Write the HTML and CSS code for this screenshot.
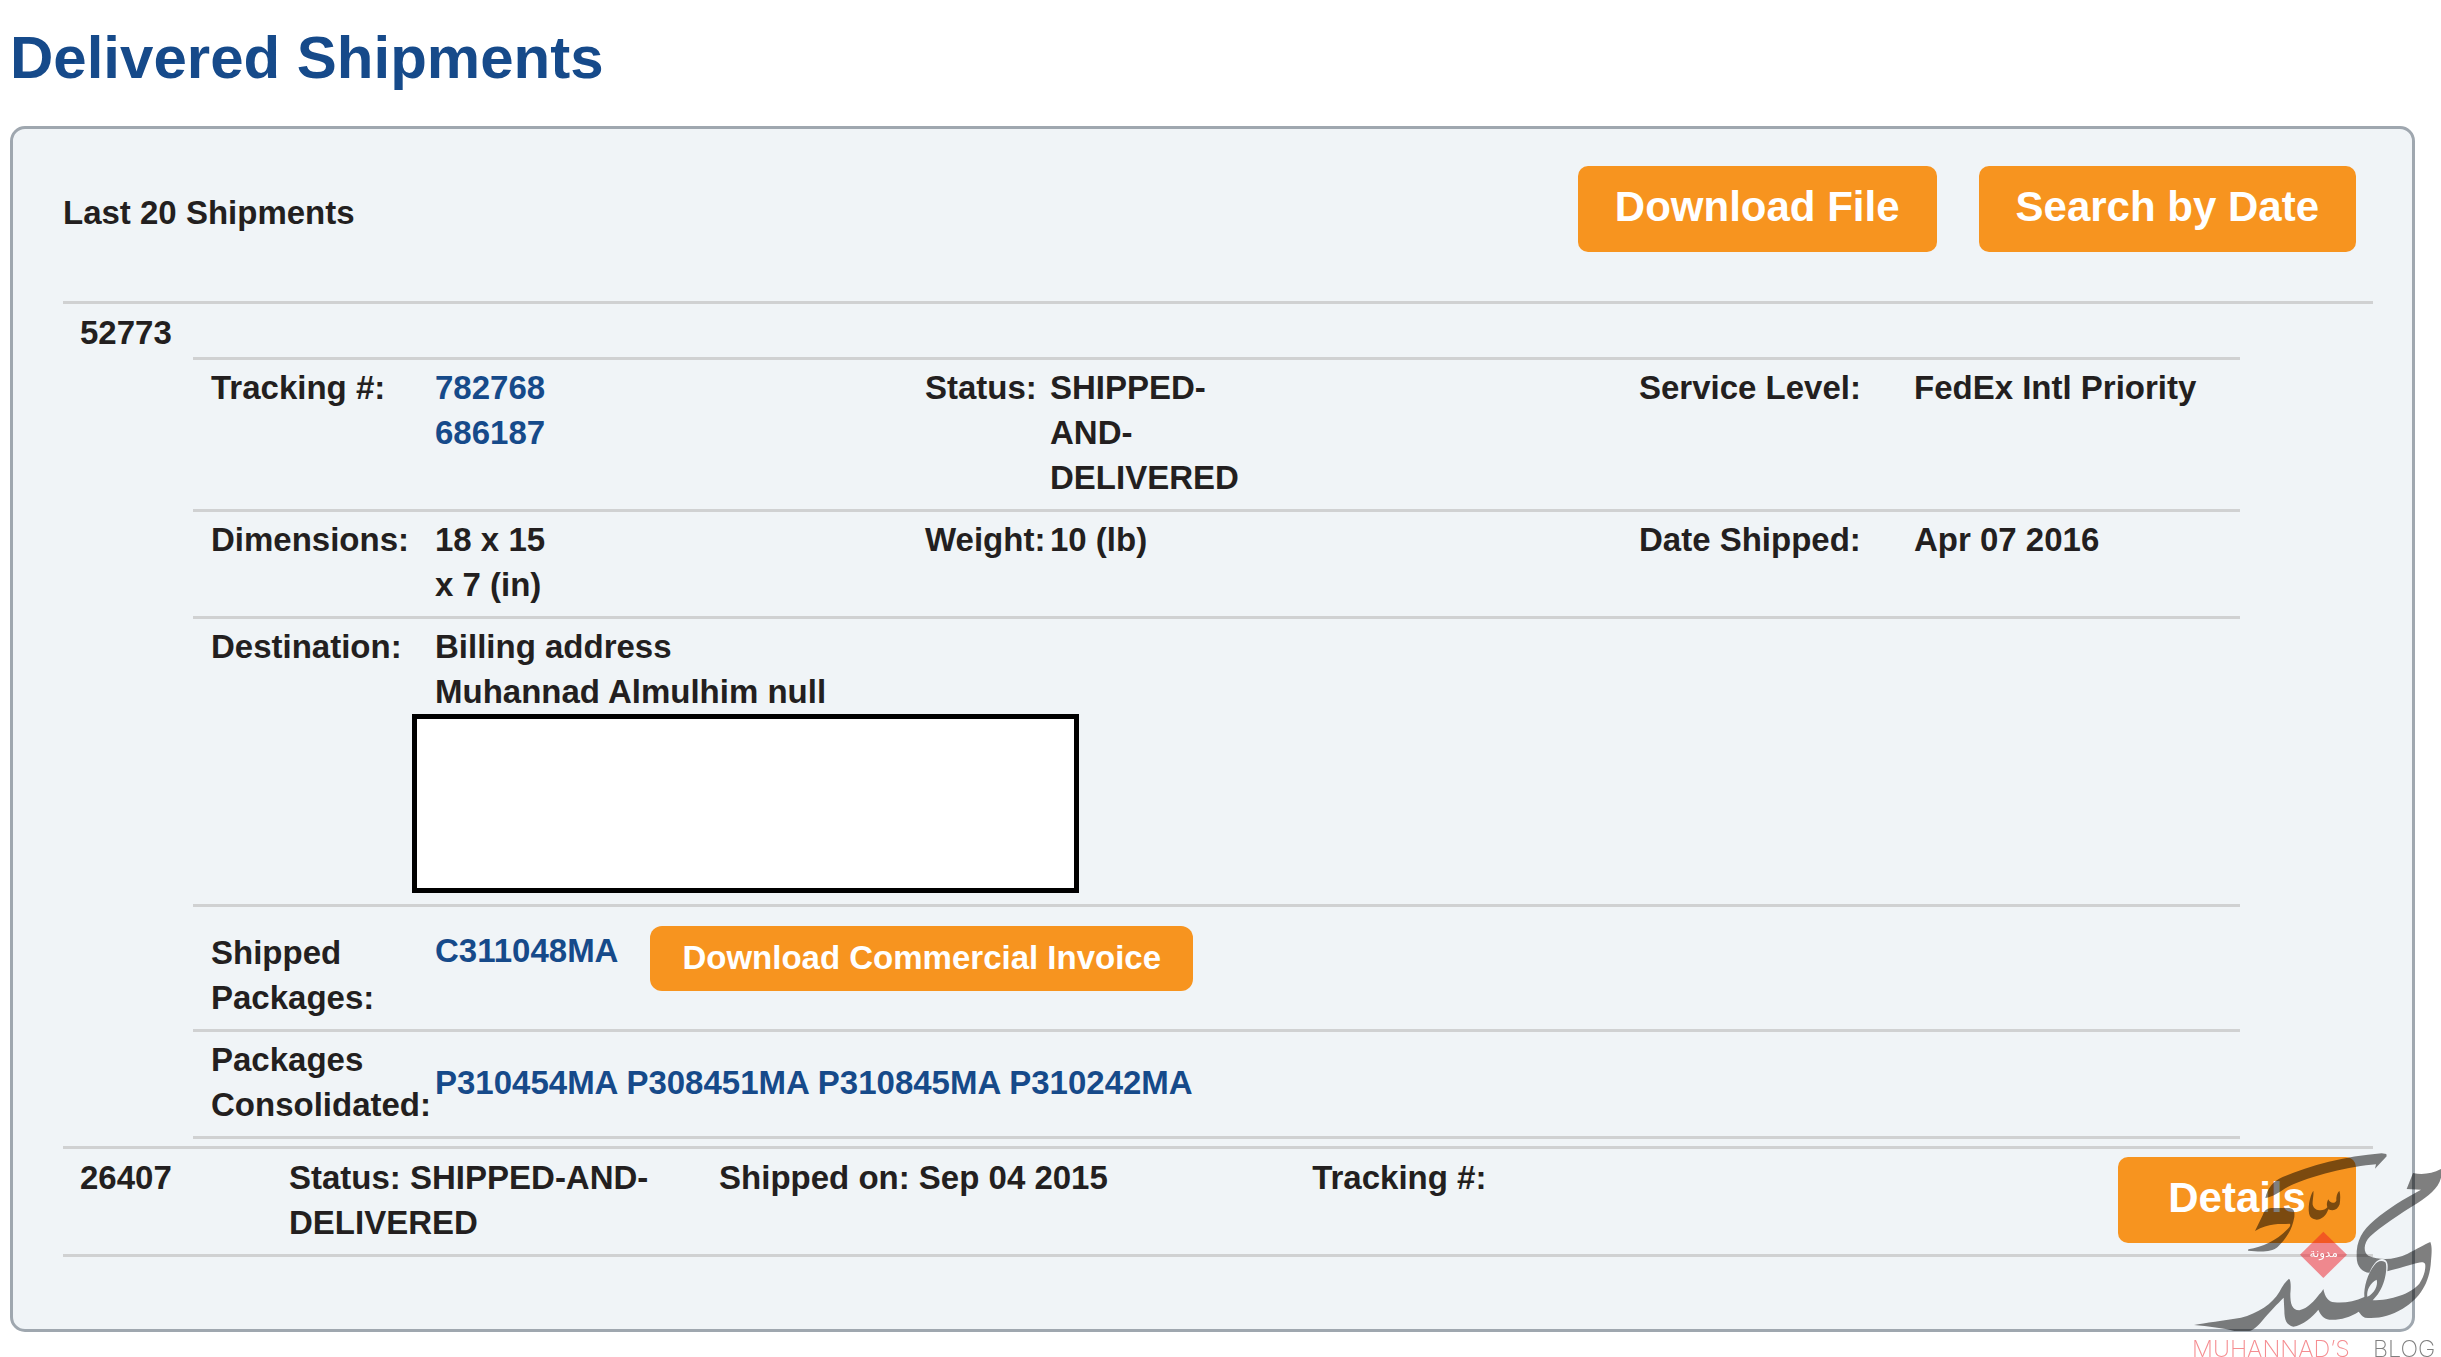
FILE: index.html
```html
<!DOCTYPE html>
<html lang="en">

<head>
    <meta charset="UTF-8">
    <title>Delivered Shipments</title>
    <link rel="stylesheet" href="styles.css">
</head>

<body>
    <h1>Delivered Shipments</h1>

    <main class="panel">
        <div class="panel-header">
            <h2>Last 20 Shipments</h2>
            <div class="actions">
                <button type="button" class="btn">Download File</button>
                <button type="button" class="btn">Search by Date</button>
            </div>
        </div>

        <!-- opened shipment -->
        <section class="shipment">
            <div class="shipment-id">52773</div>
            <div class="details">
                <dl class="row fields">
                    <dt>Tracking #:</dt>
                    <dd><a href="#" class="short">782768 686187</a></dd>
                    <dt>Status:</dt>
                    <dd><span class="status">SHIPPED-AND-DELIVERED</span></dd>
                    <dt>Service Level:</dt>
                    <dd>FedEx Intl Priority</dd>
                </dl>
                <dl class="row fields">
                    <dt>Dimensions:</dt>
                    <dd><span class="short">18 x 15 x 7 (in)</span></dd>
                    <dt>Weight:</dt>
                    <dd>10 (lb)</dd>
                    <dt>Date Shipped:</dt>
                    <dd>Apr 07 2016</dd>
                </dl>
                <dl class="row single destination">
                    <dt>Destination:</dt>
                    <dd>
                        Billing address<br>
                        Muhannad Almulhim null
                        <div class="address-box"></div>
                    </dd>
                </dl>
                <dl class="row single shipped">
                    <dt>Shipped Packages:</dt>
                    <dd>
                        <a href="#">C311048MA</a>
                        <button type="button" class="btn btn-small">Download Commercial Invoice</button>
                    </dd>
                </dl>
                <dl class="row single consolidated">
                    <dt>Packages Consolidated:</dt>
                    <dd>
                        <a href="#">P310454MA</a>
                        <a href="#">P308451MA</a>
                        <a href="#">P310845MA</a>
                        <a href="#">P310242MA</a>
                    </dd>
                </dl>
            </div>
        </section>

        <!-- closed shipment -->
        <section class="shipment summary">
            <div>26407</div>
            <div>Status: SHIPPED-AND-DELIVERED</div>
            <div>Shipped on: Sep 04 2015</div>
            <div>Tracking #:</div>
            <button type="button" class="btn btn-details">Details</button>
        </section>
    </main>

    <svg class="watermark" viewBox="0 0 1050 750" role="img" aria-label="Muhannad's Blog">
        <g class="ink">
            <path d="M523 273C530 245 545 222 575 210C660 175 760 148 872 139L886 141L887 148L852 185L855 172C780 178 660 205 590 240C565 255 545 270 523 273Z"/>
            <path d="M492 372L515 325C520 308 530 303 548 303L595 303C612 306 611 318 610 330C603 370 585 395 560 420C540 436 510 435 471 431L472 427C515 420 555 402 590 366C598 358 600 352 596 350C565 352 535 346 492 372Z"/>
            <path d="M667 251C669 262 664 280 665 293C670 314 699 314 709 301C706 292 708 284 712 277C716 288 730 292 736 281C735 270 738 258 745 251C749 262 748 278 746 292C740 309 727 313 712 307C702 338 672 347 657 328C648 309 656 266 667 251Z"/>
            <path fill-rule="evenodd" d="M966 198C995 204 1022 200 1050 186L1050 212C1042 245 1010 268 980 288C925 322 870 358 838 388C815 410 818 438 832 446C870 462 915 457 950 440C975 428 1000 412 1018 405C1024 420 1022 440 1020 462C1016 530 985 575 935 605C895 628 865 635 822 632C812 628 808 620 803 614C775 632 745 640 715 638C697 635 688 622 682 608C665 630 635 655 607 659C587 655 580 640 580 610L578 572C560 590 535 615 515 640C500 658 485 672 475 672L430 672C400 664 350 658 309 654C340 648 400 640 450 632C500 620 545 590 565 555C575 535 585 522 594 515C600 520 600 540 598 560C598 590 602 608 625 610C650 605 672 580 685 562C692 555 695 550 697 546C702 570 712 585 730 586C760 588 790 585 820 570C818 540 830 500 850 475C858 463 870 458 883 466C888 475 886 500 880 520C872 548 860 565 845 580C900 580 960 560 985 530C1002 505 1005 478 1002 470C995 462 980 468 965 472C935 480 910 488 889 493C893 470 888 455 872 456C855 459 845 475 835 497C815 497 797 480 797 450C795 400 815 370 850 340C890 305 940 275 990 248L947 246ZM829 569C826 550 838 526 857 518C862 534 850 560 829 569Z"/>
        </g>
        <path class="diamond" d="M697 374L768 443L697 513L627 443Z"/>
        <text class="diamond-text" x="698" y="451" text-anchor="middle">مدونة</text>
        <text class="brand" x="303" y="749">MUHANNAD’S</text>
        <text class="brand brand-dark" x="846" y="749">BLOG</text>
    </svg>
</body>

</html>
```
FILE: styles.css
```css
* {
    box-sizing: border-box;
}

body {
    margin: 28px 26px 0 10px;
    font-family: "Liberation Sans", Arial, sans-serif;
    font-size: 33px;
    line-height: 45px;
    font-weight: bold;
    color: #231f20;
    background: white;
}

h1 {
    margin: 0 0 38px;
    font-size: 60px;
    line-height: 60px;
    color: #164a8a;
}

h2 {
    margin: 0;
    padding-top: 24px;
    font-size: 33px;
}

a {
    color: #164a8a;
    text-decoration: none;
}

dl, dd {
    margin: 0;
}

.panel {
    padding: 37px 39px 72px 50px;
    background: #f0f4f7;
    border: 3px solid #9fa7af;
    border-radius: 15px;
}

.panel-header {
    display: flex;
    justify-content: space-between;
    align-items: flex-start;
    padding: 0 17px 49px 0;
}

.actions {
    display: flex;
    gap: 42px;
}

.btn {
    padding: 17px 37px 21px;
    font-family: inherit;
    font-size: 42px;
    line-height: 48px;
    font-weight: bold;
    color: white;
    background: #f7941f;
    border: none;
    border-radius: 10px;
    cursor: pointer;
}

.btn:hover {
    background: #e08214;
}

.btn-small {
    padding: 9px 32px 11px;
    font-size: 33px;
    line-height: 45px;
    border-radius: 12px;
}

.btn-details {
    align-self: center;
    padding-left: 50px;
    padding-right: 50px;
}

.shipment {
    border-top: 3px solid #d0d1d2;
}

.shipment-id {
    padding: 6px 17px 2px;
}

.details {
    margin: 0 133px 7px 130px;
    border-bottom: 3px solid #d0d1d2;
}

.row {
    display: grid;
    padding: 5px 0 9px 18px;
    border-top: 3px solid #d0d1d2;
}

.fields {
    grid-template-columns: 224px 490fr 125px 589fr 275px 326fr;
}

.single {
    grid-template-columns: 224px 1fr;
}

/* values that break over several lines */
.short {
    display: block;
    max-width: 125px;
}

.status {
    display: block;
    max-width: 200px;
}

.destination {
    padding-bottom: 11px;
}

/* hidden part of the address */
.address-box {
    width: 667px;
    max-width: 100%;
    height: 179px;
    margin-left: -23px;
    background: white;
    border: 5px solid black;
}

.shipped {
    padding-top: 19px;
}

.shipped dt {
    padding-top: 4px;
}

.shipped dd {
    display: flex;
    align-items: flex-start;
    gap: 32px;
}

.shipped a {
    padding-top: 2px;
}

.consolidated dd {
    align-self: center;
}

.summary {
    display: grid;
    grid-template-columns: 209px 430fr 593fr 806fr auto;
    padding: 6px 17px 9px;
    border-bottom: 3px solid #d0d1d2;
}

/* blog logo laid over the corner of the page */
.watermark {
    position: fixed;
    right: 0;
    bottom: 0;
    width: 350px;
    height: 250px;
    pointer-events: none;
}

.ink {
    opacity: 0.5;
}

.diamond {
    fill: #ee1c25;
    opacity: 0.5;
}

.diamond-text {
    font-family: "DejaVu Sans", sans-serif;
    font-size: 36px;
    font-weight: normal;
    fill: white;
}

.brand {
    font-family: Inter, sans-serif;
    font-size: 70px;
    font-weight: 200;
    fill: #f58d91;
}

.brand-dark {
    fill: #808080;
}
```
